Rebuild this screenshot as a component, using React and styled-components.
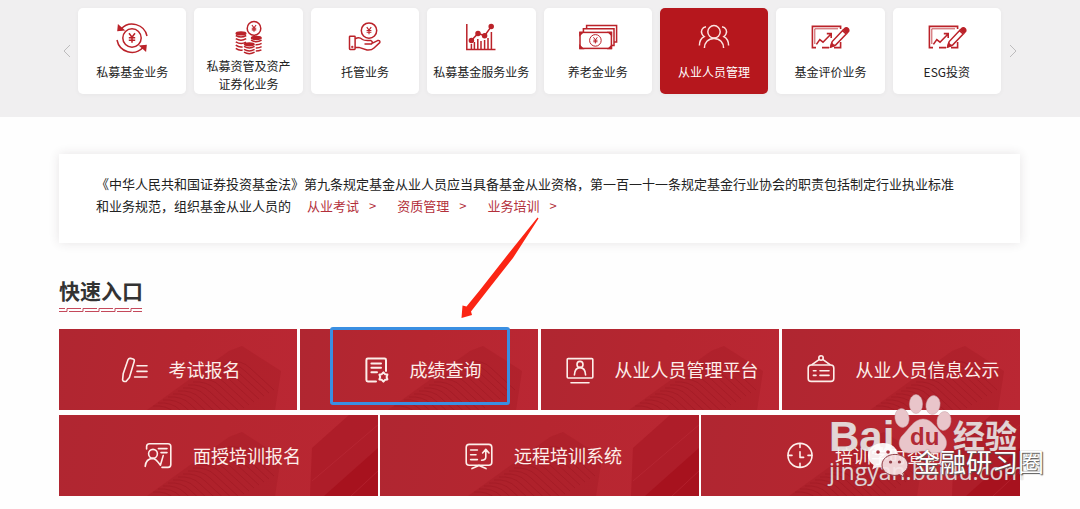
import styled, { createGlobalStyle, css } from 'styled-components'

const YEN = 'M-3 -4.5 L0 -0.5 L3 -4.5 M0 -0.5 V5 M-3.2 0 H3.2 M-3.2 2.4 H3.2'

const Yen = ({ x, y, size = 1 }) => (
	<path
		d={YEN}
		transform={`translate(${x} ${y}) scale(${size})`}
	/>
)

const FundIcon = () => (
	<CardIcon viewBox='0 0 40 36'>
		<circle cx='20' cy='18' r='9.2' />
		<Yen x={20} y={17.8} />
		<path d='M9 9 A15.2 15.2 0 0 1 35 16' />
		<path d='M5 20 A15.2 15.2 0 0 0 31 27.5' />
		<path className='fill' d='M6.5 5.5 L6 10.5 L11.5 10 Z M33.5 30.5 L34 25.5 L28.5 26 Z' />
	</CardIcon>
)

const CoinsIcon = () => (
	<CardIcon viewBox='0 0 40 36'>
		<circle cx='25' cy='8.4' r='6.8' />
		<Yen x={25} y={8.2} size={0.7} />
		<ellipse className='fill' cx='12' cy='13.4' rx='4.8' ry='1.4' />
		<ellipse className='fill' cx='27.3' cy='18' rx='4.8' ry='1.4' />
		<ellipse className='fill' cx='20.3' cy='24.3' rx='4.8' ry='1.4' />
		<path d='M6.8 15.5 Q12 18.6 17.2 15.5 M6.8 18.7 Q12 21.8 17.2 18.7 M6.8 21.9 Q12 25 17 22.2 M6.8 25.1 Q10 27.6 13.6 26.9 M6.8 28.3 Q10 30.8 13.6 30' />
		<path d='M22 20.2 Q27.3 23.3 32.6 20.2 M26.5 24.7 Q30 25 32.6 23.4 M26.8 28 Q30 28.2 32.6 26.7 M26.8 31 Q30 31 32.4 29.8' />
		<path d='M15 26.4 Q20.3 29.5 25.6 26.4 M15 29.4 Q20.3 32.5 25.6 29.4 M15 32.2 Q20.3 35.3 25.6 32.2' />
	</CardIcon>
)

const CustodyIcon = () => (
	<CardIcon viewBox='0 0 40 36'>
		<circle cx='24' cy='10.6' r='7.7' />
		<Yen x={24} y={10.5} size={0.75} />
		<rect x='4.5' y='16.2' width='5.6' height='13.2' rx='0.6' />
		<path d='M10.2 19 C13 17 15 17.5 17.5 19.5 C19.5 21 22 20.3 26 20.6 Q28.4 21.8 26.5 24 H19.5 M27.5 23.2 L32.5 20.6 Q35.4 20 34.8 22.6 L29 28 Q26.5 30.4 22 30 L14 27.4 H10.2' />
		<circle className='fill' cx='7.3' cy='27' r='0.4' />
	</CardIcon>
)

const ServiceIcon = () => (
	<CardIcon viewBox='0 0 40 36'>
		<path d='M5.8 4 V29.6 H34.5' />
		<path d='M10.4 29 V24 M13.4 29 V22 M16.8 29 V19 M20 29 V21 M23.6 29 V20 M27 29 V18 M30.4 29 V12' />
		<path d='M10.4 20.6 L17 13.4 L23.6 15.8 L30.2 6.6' />
		<circle className='fill' cx='10.4' cy='20.6' r='2' />
		<circle className='fill' cx='17' cy='13.4' r='2' />
		<circle className='fill' cx='23.6' cy='15.8' r='2' />
		<circle className='fill' cx='30.2' cy='6.6' r='2' />
	</CardIcon>
)

const PensionIcon = () => (
	<CardIcon viewBox='0 0 40 36'>
		<rect x='2' y='12.4' width='31.4' height='16' />
		<path d='M5.4 12 V8.8 H36 V25.4 H33.6 M8.6 8.4 V5.6 H38.6 V22 H36.2' />
		<circle cx='17.4' cy='20.4' r='5.8' strokeWidth='1' />
		<Yen x={17.4} y={20.2} size={0.65} />
		<path className='fill' d='M2 12.4 h2.6 l-2.6 2.6z M33.4 12.4 h-2.6 l2.6 2.6z M2 28.4 h2.6 l-2.6 -2.6z M33.4 28.4 h-2.6 l2.6 -2.6z' />
	</CardIcon>
)

const PeopleIcon = () => (
	<CardIcon viewBox='0 0 40 36'>
		<circle cx='20' cy='11.8' r='6.2' />
		<path d='M10.4 28 C10.4 22.6 14 18.4 20 18.4 C26 18.4 29.6 22.6 29.6 28' />
		<path d='M12 6.8 C8 7.4 6.6 11 8 14 Q8.6 15.4 10.2 16.6 C7 18.2 5.4 21 5.4 25.6 M28 6.8 C32 7.4 33.4 11 32 14 Q31.4 15.4 29.8 16.6 C33 18.2 34.6 21 34.6 25.6' />
	</CardIcon>
)

const ReviewIcon = () => (
	<CardIcon viewBox='0 0 40 36'>
		<path d='M30.6 9 V6.4 H2.4 V27.6 H6 M12 27.6 H19 M24 27.6 H30.6 V22' strokeWidth='1.6' />
		<path d='M4.8 24 V8.8 H28' strokeWidth='0.8' />
		<path d='M6.4 24.4 L9.8 19.6 L13 22.2 L20.8 14.2 M16.8 13.6 H21.2 V18' strokeWidth='1.6' />
		<path d='M20.8 26.8 L22.2 21.6 L32.6 10.6 L36.2 14 L25.6 25 Z' />
		<path className='fill' d='M33.4 9.8 L35.4 8 Q37 7.4 38.2 8.8 Q39.2 10.2 38.6 11.4 L37 13.2 Z M20.6 27 L21.6 23.4 L24.2 25.8 Z' />
	</CardIcon>
)

const ExamIcon = () => (
	<TileIcon viewBox='0 0 28 28'>
		<path d='M8 3.8 Q8.8 2 10.6 2.4 L13 3 Q14.8 3.6 14.2 5.6 L9.4 21.4 L6 25.4 Q3 26 2.6 23.8 L3.2 17.8 Z' />
		<path d='M17 9.8 H27 M17 15.4 H27 M14.6 21 H27' />
	</TileIcon>
)

const ScoreIcon = () => (
	<TileIcon viewBox='0 0 28 28'>
		<path d='M25 15 V4 Q25 2.6 23.6 2.6 H6.8 Q5.4 2.6 5.4 4 V24 Q5.4 25.4 6.8 25.4 H15' strokeWidth='2' />
		<path d='M10.4 7.4 H20 M10.4 11.8 H20 M10.4 16.2 H16' strokeWidth='2' />
		<path d='M22.4 16.4 L24 18.2 L26.4 18.6 L25.6 21 L26.4 23.4 L24 23.8 L22.4 25.6 L20.8 23.8 L18.4 23.4 L19.2 21 L18.4 18.6 L20.8 18.2 Z' strokeWidth='2' />
	</TileIcon>
)

const PlatformIcon = () => (
	<TileIcon viewBox='0 0 28 28'>
		<rect x='1.2' y='2.6' width='25.6' height='19.4' rx='1' />
		<circle cx='14' cy='8.4' r='3' />
		<path d='M8.4 19 C8.6 14.6 10.6 11.6 14 11.6 C17.4 11.6 19.4 14.6 19.6 19 M5 26.8 H23' />
	</TileIcon>
)

const NoticeIcon = () => (
	<TileIcon viewBox='0 0 28 28'>
		<rect x='1.2' y='9' width='25.6' height='16.4' rx='3' />
		<circle cx='14' cy='2' r='2.2' />
		<path d='M5 8.6 L12 3.6 M23 8.6 L16 3.6 M6.4 14.8 H9 M13 14.8 H22 M6.4 19.4 H9 M13 19.4 H22' />
	</TileIcon>
)

const ClassIcon = () => (
	<TileIcon viewBox='0 0 28 28'>
		<path d='M2.6 7 V4.6 Q2.6 1.8 5.6 1.8 H24 Q26.8 1.8 26.8 4.6 V22.6 Q26.8 25.4 24 25.4 H18' />
		<circle cx='9' cy='11.8' r='4.4' />
		<path d='M1.2 24.4 C1.6 19.6 4.6 16.6 9 16.4 C11.4 16.4 13 18.6 16.4 23.2 L19.2 13.6 M14.4 6.6 H23 M17 10.6 H23' />
	</TileIcon>
)

const RemoteIcon = () => (
	<TileIcon viewBox='0 0 28 28'>
		<rect x='1.2' y='2.4' width='25.6' height='20.8' rx='3' />
		<path d='M5.6 8 H12.4 M5.6 12.8 H11 M5.6 17.6 H12.4 M17.6 11 L20.8 7.4 L24 11 M20.8 8 V15 Q20.8 18 16.6 18.2 M14 23.4 L7 26.6 M14 23.4 L21 26.6' />
	</TileIcon>
)

const ClockIcon = () => (
	<TileIcon viewBox='0 0 28 28'>
		<circle cx='14' cy='13.4' r='12' />
		<path d='M14 1.6 V5.4 M14 21.4 V25.2 M2.2 13.4 H6 M22 13.4 H25.8 M14 9.8 V15.4 H17.6' />
	</TileIcon>
)

const ridges = Array.from({ length: 16 }, (_, i) => i)

const TowerArt = () => (
	<Art
		viewBox='0 0 320 81'
		preserveAspectRatio='xMinYMin slice'
		aria-hidden='true'>
		<path d='M88 81 L170 22 L183 17 L222 42 L216 81 Z' fill='#a01822' opacity='0.3' />
		{ridges.map((i) => (
			<path
				key={i}
				d={`M${94 + i * 5} ${77 - i * 3} Q${108 + i * 5} ${76 - i * 3} ${116 + i * 5} ${84 - i * 3} L${140 + i * 5} ${106 - i * 3}`}
				fill='none'
				stroke='#8f101b'
				strokeWidth='1'
				opacity='0.3'
			/>
		))}
		<path d='M253 33 L290 0 H320 V81 H251 Z' fill='#a3141f' opacity='0.5' />
		<path d='M265 81 L320 32 V81 Z' fill='#a20c17' opacity='0.6' />
		<path d='M253 66 L320 9 M292 81 L320 55' stroke='#c23340' strokeWidth='1' opacity='0.4' />
	</Art>
)

const business = [
	{ name: '私募基金业务', Icon: FundIcon },
	{ name: '私募资管及资产证券化业务', Icon: CoinsIcon, twoLines: true },
	{ name: '托管业务', Icon: CustodyIcon },
	{ name: '私募基金服务业务', Icon: ServiceIcon },
	{ name: '养老金业务', Icon: PensionIcon },
	{ name: '从业人员管理', Icon: PeopleIcon, active: true },
	{ name: '基金评价业务', Icon: ReviewIcon },
	{ name: 'ESG投资', Icon: ReviewIcon },
]

const links = ['从业考试', '资质管理', '业务培训']

const topEntries = [
	{ name: '考试报名', Icon: ExamIcon },
	{ name: '成绩查询', Icon: ScoreIcon, marked: true },
	{ name: '从业人员管理平台', Icon: PlatformIcon },
	{ name: '从业人员信息公示', Icon: NoticeIcon },
]

const bottomEntries = [
	{ name: '面授培训报名', Icon: ClassIcon },
	{ name: '远程培训系统', Icon: RemoteIcon },
	{ name: '培训学时查询', Icon: ClockIcon },
]

const Entry = ({ name, Icon, marked, wide }) => (
	<Tile href='#'>
		<TowerArt />
		<TileContent $wide={wide}>
			<Icon />
			<span>{name}</span>
		</TileContent>
		{marked && (
			<Highlight>
				<Arrow viewBox='0 0 84 106'>
					<path d='M78.5 3.5 L79.5 4.5 L54 44 L28 77 L12 97.5 L13 101 L2.5 104 L3.5 91.5 L7.5 92.5 L21 76 L50 39 Z' />
				</Arrow>
			</Highlight>
		)}
	</Tile>
)

const Watermark = () => (
	<Marks>
		<MarkText $left={0} $top={23} $size={42} $bold>Bai</MarkText>
		<Paw viewBox='0 0 60 60'>
			<ellipse cx='8' cy='24' rx='7' ry='9.5' transform='rotate(-10 8 24)' />
			<ellipse cx='22' cy='10' rx='6.6' ry='9.5' />
			<ellipse cx='39' cy='11' rx='7' ry='9.5' transform='rotate(10 39 11)' />
			<ellipse cx='50' cy='27' rx='7' ry='9.5' transform='rotate(8 50 27)' />
			<path d='M29 25 C38 25 42 34 49 41 C56 48 52 59 42 59 C36 59 34 57 29 57 C24 57 22 59 16 59 C6 59 2 49 8 42 C15 35 20 25 29 25 Z' />
		</Paw>
		<PawText>du</PawText>
		<MarkText $left={124} $top={28} $size={32} $bold>经验</MarkText>
		<MarkText $left={0} $top={67} $size={23}>jingyan.baidu.com</MarkText>
		<Chat viewBox='0 0 42 36'>
			<path d='M16 1 C7 1 1 6.6 1 13.4 C1 17.6 3.2 20.8 6.6 23 L5.2 27.4 L10.4 25 Q13 25.8 16 25.8 C24 25.8 31 20.4 31 13.4 C31 6.4 24.6 1 16 1 Z' fill='#fff' />
			<path d='M28 12.4 C20.6 12.4 15 17 15 23 C15 29 20.6 33.4 28 33.4 Q30.4 33.4 32.6 32.6 L37 35 L35.8 31 C39 29 41 26.4 41 23 C41 17 35.4 12.4 28 12.4 Z' fill='#f6e3e5' stroke='#8b3a42' strokeWidth='1' />
			<circle cx='11' cy='10' r='1.8' fill='#a8323d' />
			<circle cx='21' cy='10' r='1.8' fill='#a8323d' />
			<circle cx='23.6' cy='20' r='1.6' fill='#8b3a42' />
			<circle cx='32.4' cy='20' r='1.6' fill='#8b3a42' />
		</Chat>
		<Account>金融研习圈</Account>
	</Marks>
)

const App = () => {
	return (
		<>
			<GlobalStyle />
			<Banner>
				<NavButton aria-label='上一页'>
					<svg viewBox='0 0 8 14'>
						<path d='M7 1 L1 7 L7 13' />
					</svg>
				</NavButton>
				<Cards>
					{business.map(({ name, Icon, active, twoLines }) => (
						<Card
							href='#'
							key={name}
							$active={active}>
							<Icon />
							<CardLabel $twoLines={twoLines}>{name}</CardLabel>
						</Card>
					))}
				</Cards>
				<NavButton aria-label='下一页'>
					<svg viewBox='0 0 8 14'>
						<path d='M1 1 L7 7 L1 13' />
					</svg>
				</NavButton>
			</Banner>
			<Main>
				<Notice>
					<span>《中华人民共和国证券投资基金法》第九条规定基金从业人员应当具备基金从业资格，第一百一十一条规定基金行业协会的职责包括制定行业执业标准</span>
					<span>和业务规范，组织基金从业人员的</span>
					{links.map((item) => (
						<NoticeLink
							href='#'
							key={item}>
							{item}
							<span>&gt;</span>
						</NoticeLink>
					))}
				</Notice>
				<Title>
					快速入口
					<svg viewBox='0 0 83 5'>
						{[0, 1, 2, 3, 4, 5].map((i) => (
							<path
								key={i}
								d={`M${i * 16 - 6} 4.5 H${i * 16 + 8} V1.5 H${i * 16 + 22}`}
							/>
						))}
						<path d='M0 1.5 H6' />
					</svg>
				</Title>
				<Entries>
					<Row $columns={4} $gap={3}>
						{topEntries.map((item) => (
							<Entry key={item.name} {...item} />
						))}
					</Row>
					<Row $columns={3} $gap={2}>
						{bottomEntries.map((item) => (
							<Entry key={item.name} {...item} wide />
						))}
					</Row>
					<Watermark />
				</Entries>
			</Main>
		</>
	)
}

const GlobalStyle = createGlobalStyle`
	* {
		box-sizing: border-box;
	}

	body {
		margin: 0;
		background: #fefefe;
		color: #222;
		font-family: 'Noto Sans CJK SC', 'Noto Sans', sans-serif;
	}

	a {
		color: inherit;
		text-decoration: none;
	}
`

const Banner = styled.nav`
	display: flex;
	align-items: center;
	padding: 8px 60px 23px 59px;
	background: #f0eff0;
`

const NavButton = styled.button`
	display: flex;
	justify-content: center;
	width: 19px;
	padding: 0 4px 0 0;
	border: 0;
	background: none;
	cursor: pointer;

	&:last-child {
		padding: 0 0 0 4px;
	}

	svg {
		width: 8px;
		height: 14px;
		flex: none;
		fill: none;
		stroke: #bdbcbd;
	}
`

const Cards = styled.div`
	flex: 1;
	display: grid;
	grid-template-columns: repeat(8, minmax(0, 1fr));
	gap: 8px;
`

const Card = styled.a`
	display: flex;
	flex-direction: column;
	align-items: center;
	height: 86px;
	padding-top: 12px;
	border-radius: 5px;
	background: ${({ $active }) => ($active ? '#b6171d' : '#fff')};
	color: ${({ $active }) => ($active ? '#fff' : '#222')};
	box-shadow: 0 1px 5px rgba(0, 0, 0, 0.04);

	svg {
		color: ${({ $active }) => ($active ? '#fbe3e0' : '#bb2229')};
	}
`

const CardIcon = styled.svg`
	flex: none;
	width: 40px;
	height: 36px;
	fill: none;
	stroke: currentColor;
	stroke-width: 1.5;

	.fill {
		fill: currentColor;
	}
`

const CardLabel = styled.span`
	width: 100%;
	margin-top: ${({ $twoLines }) => ($twoLines ? '1px' : '7px')};
	padding: 0 ${({ $twoLines }) => ($twoLines ? '12px' : '0')};
	font-size: 12px;
	line-height: 18px;
	text-align: center;
`

const Main = styled.main`
	padding: 37px 60px 12px 59px;
`

const Notice = styled.p`
	margin: 0;
	padding: 19px 59px 26px 37px;
	background: #fff;
	box-shadow: 0 0 10px rgba(60, 40, 50, 0.12);
	font-size: 13px;
	line-height: 22px;
`

const NoticeLink = styled.a`
	margin-left: 16px;
	color: #b3303b;

	& + & {
		margin-left: 21px;
	}

	span {
		margin-left: 10px;
	}
`

const Title = styled.h2`
	display: flex;
	flex-direction: column;
	gap: 2px;
	margin: 32px 0 17px;
	color: #333;
	font-size: 21px;
	line-height: 30px;

	svg {
		width: 83px;
		height: 5px;
		fill: none;
		stroke: #c4485a;
	}
`

const Entries = styled.section`
	position: relative;
	display: grid;
	gap: 5px;
`

const Row = styled.div`
	display: grid;
	grid-template-columns: repeat(${({ $columns }) => $columns}, minmax(0, 1fr));
	gap: ${({ $gap }) => $gap}px;
`

const Tile = styled.a`
	position: relative;
	display: grid;
	grid-template-columns: minmax(0, 1fr);
	background: linear-gradient(100deg, #b02631, #b62630 50%, #ba2733);
	color: #fdeeea;
	font-size: 18px;
	line-height: 27px;
`

const Art = styled.svg`
	grid-area: 1 / 1;
	display: block;
	width: 100%;
	height: 81px;
`

const TileContent = styled.span`
	grid-area: 1 / 1;
	z-index: 1;
	display: flex;
	align-items: center;
	justify-content: center;
	gap: 21px;
	padding-left: ${({ $wide }) => ($wide ? '8px' : '4px')};
	white-space: nowrap;
`

const TileIcon = styled.svg`
	flex: none;
	width: 28px;
	height: 28px;
	overflow: visible;
	fill: none;
	stroke: currentColor;
	stroke-width: 1.6;
	stroke-linecap: round;
	stroke-linejoin: round;
`

const Highlight = styled.span`
	position: absolute;
	z-index: 2;
	top: -2px;
	left: 30px;
	width: 180px;
	height: 78px;
	border: 3px solid #3a8fe2;
	border-radius: 3px;
`

const Arrow = styled.svg`
	position: absolute;
	bottom: 82px;
	left: 126px;
	width: 84px;
	height: 106px;
	fill: #fb2514;
`

const Marks = styled.div`
	position: absolute;
	z-index: 3;
	top: 64px;
	right: -26px;
	width: 217px;
	height: 100px;
	pointer-events: none;
`

const overlay = css`
	position: absolute;
	line-height: 1;
	white-space: nowrap;
`

const MarkText = styled.span`
	${overlay}
	top: ${({ $top }) => $top}px;
	left: ${({ $left }) => $left}px;
	color: rgba(255, 255, 255, 0.75);
	font-family: ${({ $bold }) => ($bold ? "'Liberation Sans', 'Noto Sans CJK SC'" : "'Open Sans', 'Noto Sans'")}, sans-serif;
	font-size: ${({ $size }) => $size}px;
	font-weight: ${({ $bold }) => ($bold ? 700 : 400)};
	text-shadow: 0 0 1px rgba(120, 120, 120, 0.6);
`

const Paw = styled.svg`
	position: absolute;
	top: 1px;
	left: 65px;
	width: 60px;
	height: 60px;
	fill: #e9c5ca;
	stroke: #c9a4a8;
	stroke-width: 0.5;
`

const PawText = styled.span`
	${overlay}
	top: 32px;
	left: 81px;
	color: #b22a36;
	font-family: 'Liberation Sans', sans-serif;
	font-size: 24px;
	font-weight: 700;
`

const Chat = styled.svg`
	position: absolute;
	top: 49px;
	left: 38px;
	width: 42px;
	height: 36px;
	opacity: 0.92;
`

const Account = styled.span`
	${overlay}
	top: 55px;
	left: 85px;
	color: #fff;
	font-size: 26px;
	text-shadow: 1px 1px 1px #555, 0 0 1px #555;
`

export default App
